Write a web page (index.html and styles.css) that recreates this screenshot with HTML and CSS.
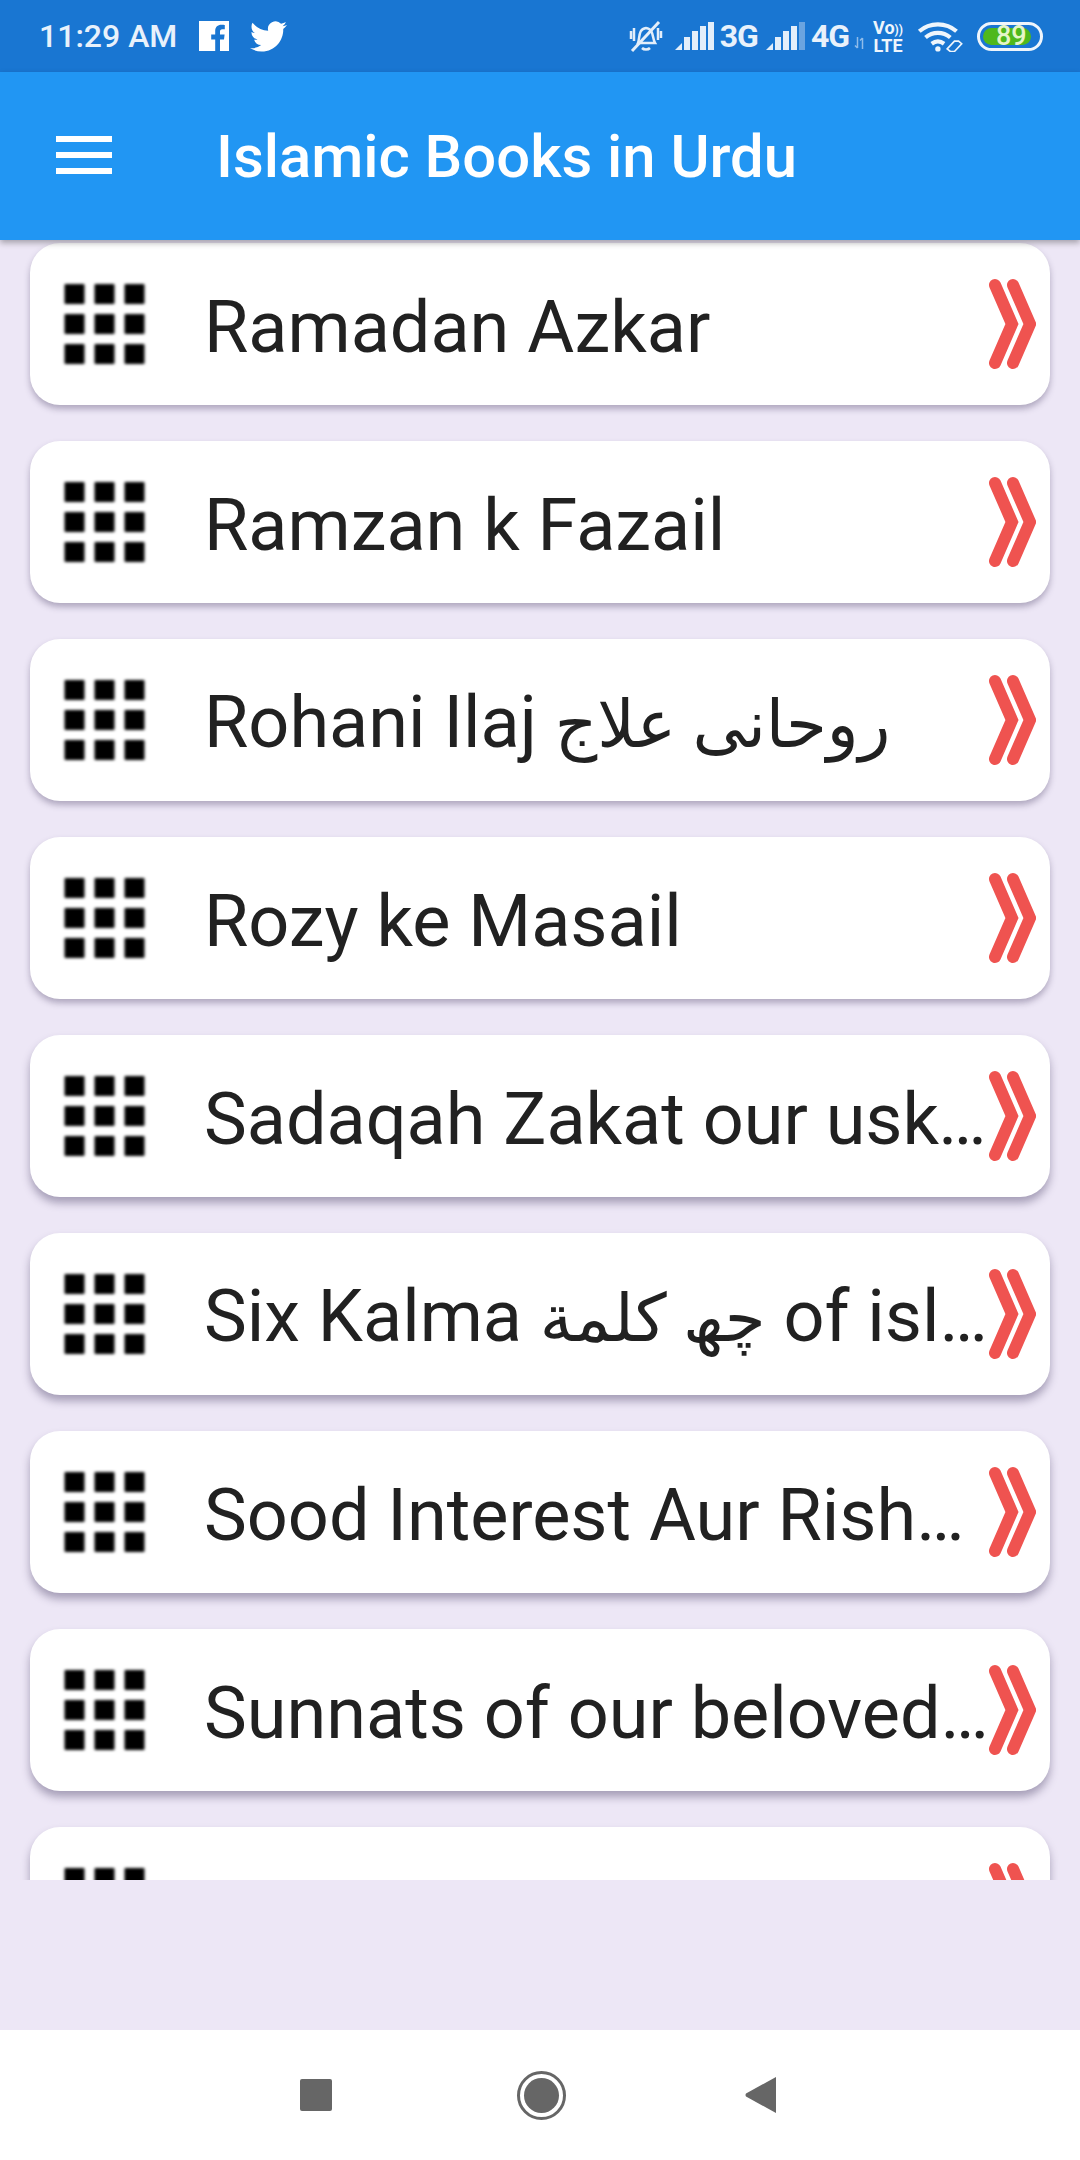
FILE: index.html
```html
<!DOCTYPE html>
<html lang="en">
<head>
  <meta charset="UTF-8">
  <meta name="viewport" content="width=device-width, initial-scale=1.0">
  <title>Islamic Books in Urdu</title>
  <link rel="stylesheet" href="styles.css">
</head>
<body>
  <!-- shared icons -->
  <svg class="icon-defs" width="0" height="0">
    <symbol id="grid" viewBox="0 0 84 82">
      <rect x="1.5" y="1" width="20" height="20" rx="1"/><rect x="31.5" y="1" width="20" height="20" rx="1"/><rect x="61.5" y="1" width="20" height="20" rx="1"/>
      <rect x="1.5" y="31" width="20" height="20" rx="1"/><rect x="31.5" y="31" width="20" height="20" rx="1"/><rect x="61.5" y="31" width="20" height="20" rx="1"/>
      <rect x="1.5" y="61" width="20" height="20" rx="1"/><rect x="31.5" y="61" width="20" height="20" rx="1"/><rect x="61.5" y="61" width="20" height="20" rx="1"/>
    </symbol>
    <symbol id="chevrons" viewBox="0 0 50 92">
      <path d="M9 7 L26 46 L9 85 M27 7 L44 46 L27 85" fill="none" stroke="#ef5350" stroke-width="12" stroke-linecap="round" stroke-linejoin="miter"/>
    </symbol>
  </svg>

  <!-- status bar -->
  <div class="status-bar">
    <span class="time">11:29 AM</span>
    <svg class="fb-icon" viewBox="0 0 30 30" width="30" height="30"><path fill="#fff" d="M0 0H30V30H21V18.5H25L25.6 13.6H21V10.6C21 9.2 21.4 8.2 23.4 8.2H25.8V3.9C25.4 3.8 24 3.7 22.3 3.7C18.8 3.7 16.2 5.9 16.2 10V13.6H12.2V18.5H16.2V30H0Z"/></svg>
    <svg class="tw-icon" viewBox="0 0 24 24" width="37" height="37"><path fill="#fff" d="M23.95 4.57a10 10 0 0 1-2.82.77 4.96 4.96 0 0 0 2.16-2.72c-.95.55-2 .96-3.13 1.18a4.92 4.92 0 0 0-8.38 4.48C7.69 8.09 4.07 6.13 1.64 3.16a4.82 4.82 0 0 0-.67 2.48c0 1.71.87 3.21 2.19 4.1a4.9 4.9 0 0 1-2.23-.62v.06a4.92 4.92 0 0 0 3.95 4.83 5 5 0 0 1-2.21.08 4.94 4.94 0 0 0 4.6 3.42A9.87 9.87 0 0 1 0 19.54a14 14 0 0 0 7.56 2.21c9.05 0 14-7.5 14-13.98 0-.21 0-.42-.02-.63a9.94 9.94 0 0 0 2.46-2.55z"/></svg>

    <div class="status-right">
      <svg class="bell" viewBox="0 0 34 34" width="34" height="34" fill="none" stroke="#e3eefa" stroke-width="2.5">
        <path d="M9 24C11 19 9 10 17 9C25 10 23 19 26 24Z"/>
        <path d="M13 29C15 31 19 31 21 29" />
        <path d="M2 12V20M5 9V22M29 9V21M32 12V19"/>
        <path d="M3 32L30 3" stroke-width="3"/>
      </svg>
      <svg class="bars" viewBox="0 0 39 28" width="39" height="28"><path fill="#e3eefa" d="M0 28L7 21V28Z"/><rect fill="#e3eefa" x="9" y="15" width="6" height="13"/><rect fill="#e3eefa" x="17" y="9" width="6" height="19"/><rect fill="#e3eefa" x="25" y="4" width="6" height="24"/><rect fill="#e3eefa" x="33" y="0" width="6" height="28"/></svg>
      <span class="net">3G</span>
      <svg class="bars" viewBox="0 0 39 28" width="39" height="28"><path fill="#e3eefa" d="M0 28L7 21V28Z"/><rect fill="#e3eefa" x="9" y="15" width="6" height="13"/><rect fill="#e3eefa" x="17" y="9" width="6" height="19"/><rect fill="#e3eefa" x="25" y="4" width="6" height="24"/><rect fill="#6aa4e0" x="33" y="0" width="6" height="28"/></svg>
      <span class="net net-last">4G</span>
      <svg class="updown" viewBox="0 0 12 12" width="12" height="12" fill="none" stroke="#8fbcea" stroke-width="1.5"><path d="M3.5 0V11M1 8.5L3.5 11M8.5 12V1M6 3.5L8.5 1"/></svg>
      <span class="volte"><span>Vo<small>))</small></span><span>LTE</span></span>
      <svg class="wifi" viewBox="0 0 46 30" width="48" height="31" fill="none" stroke="#eef5fc" stroke-width="4">
        <path d="M2 10C12 1 28 1 38 10M8 16C15 10 25 10 32 16M14 22C18 19 22 19 26 22"/>
        <circle cx="20" cy="27" r="2.6" fill="#eef5fc" stroke="none"/>
        <path d="M29 27L36 19.5L40 19.5L43 22L36 29.5L32 29.5Z" stroke-width="1.6"/>
      </svg>
      <div class="battery"><div class="battery-fill"></div><span class="battery-num">89</span></div>
    </div>
  </div>

  <!-- app bar -->
  <div class="app-bar">
    <div class="menu-icon"><span></span><span></span><span></span></div>
    <div class="app-title">Islamic Books in Urdu</div>
  </div>

  <!-- book list -->
  <div class="book-list">
    <div class="book-card">
      <svg class="grid-icon"><use href="#grid"/></svg>
      <span class="book-name">Ramadan Azkar</span>
      <svg class="chevron-icon"><use href="#chevrons"/></svg>
    </div>
    <div class="book-card">
      <svg class="grid-icon"><use href="#grid"/></svg>
      <span class="book-name">Ramzan k Fazail</span>
      <svg class="chevron-icon"><use href="#chevrons"/></svg>
    </div>
    <div class="book-card">
      <svg class="grid-icon"><use href="#grid"/></svg>
      <span class="book-name">Rohani Ilaj <span class="urdu">روحانی علاج</span></span>
      <svg class="chevron-icon"><use href="#chevrons"/></svg>
    </div>
    <div class="book-card">
      <svg class="grid-icon"><use href="#grid"/></svg>
      <span class="book-name">Rozy ke Masail</span>
      <svg class="chevron-icon"><use href="#chevrons"/></svg>
    </div>
    <div class="book-card">
      <svg class="grid-icon"><use href="#grid"/></svg>
      <span class="book-name">Sadaqah Zakat our uske Masail</span>
      <svg class="chevron-icon"><use href="#chevrons"/></svg>
    </div>
    <div class="book-card">
      <svg class="grid-icon"><use href="#grid"/></svg>
      <span class="book-name">Six Kalma <span class="urdu">چھ کلمة</span> of islam in Urdu</span>
      <svg class="chevron-icon"><use href="#chevrons"/></svg>
    </div>
    <div class="book-card">
      <svg class="grid-icon"><use href="#grid"/></svg>
      <span class="book-name">Sood Interest Aur Rishwat</span>
      <svg class="chevron-icon"><use href="#chevrons"/></svg>
    </div>
    <div class="book-card">
      <svg class="grid-icon"><use href="#grid"/></svg>
      <span class="book-name">Sunnats of our beloved Prophet</span>
      <svg class="chevron-icon"><use href="#chevrons"/></svg>
    </div>
    <div class="book-card">
      <svg class="grid-icon"><use href="#grid"/></svg>
      <span class="book-name"></span>
      <svg class="chevron-icon"><use href="#chevrons"/></svg>
    </div>
  </div>

  <div class="list-footer"></div>

  <!-- android nav -->
  <div class="nav-bar">
    <div class="nav-square"></div>
    <div class="nav-circle"><div class="nav-dot"></div></div>
    <svg class="nav-back" viewBox="0 0 32 36" width="32" height="36"><path fill="#666" d="M31 0V36L1 19.5Q0 18 1 16.5Z"/></svg>
  </div>
</body>
</html>
```

FILE: styles.css
```css
* {
  box-sizing: border-box;
}
body {
  margin: 0;
  width: 1080px;
  height: 2160px;
  display: flex;
  flex-direction: column;
  background: #ede7f6;
  font-family: Roboto, "DejaVu Sans", sans-serif;
  overflow: hidden;
}
.icon-defs {
  position: absolute;
}

/* status bar */
.status-bar {
  height: 72px;
  flex: none;
  display: flex;
  align-items: center;
  padding-left: 39px;
  background: #1976d2;
  color: #e8f1fb;
}
.time {
  font-size: 32px;
  font-weight: 500;
  margin-right: 22px;
}
.fb-icon {
  margin-right: 21px;
}
.status-right {
  margin-left: auto;
  display: flex;
  align-items: center;
  padding-right: 37px;
}
.bell {
  margin-right: 12px;
}
.bars {
  margin-right: 6px;
}
.net {
  font-size: 32px;
  font-weight: 700;
  letter-spacing: -1px;
  margin-right: 8px;
}
.net-last {
  margin-right: 7px;
}
.updown {
  margin: 14px 7px 0 -2px;
}
.volte {
  display: flex;
  flex-direction: column;
  align-items: center;
  font-size: 18px;
  font-weight: 700;
  line-height: 15px;
  margin-right: 14px;
  color: #eef5fc;
}
.volte small {
  font-size: 12px;
}
.wifi {
  margin-right: 12px;
}
.battery {
  position: relative;
  width: 66px;
  height: 29px;
  border: 3px solid #eef5fc;
  border-radius: 15px;
  padding: 3px;
}
.battery-fill {
  width: 89%;
  height: 100%;
  border-radius: 9px;
  background: #4fb81c;
}
.battery-num {
  position: absolute;
  left: 16px;
  top: -4px;
  font-size: 27px;
  line-height: 31px;
  font-weight: 500;
  color: #e6f5c8;
}

/* app bar */
.app-bar {
  position: relative;
  z-index: 2;
  height: 168px;
  flex: none;
  display: flex;
  align-items: center;
  padding-left: 56px;
  background: #2196f3;
  box-shadow: 0 3px 6px rgba(0, 0, 0, 0.3);
}
.menu-icon {
  width: 56px;
  display: flex;
  flex-direction: column;
  gap: 10px;
  margin-right: 104px;
  margin-top: -2px;
}
.menu-icon span {
  height: 6px;
  background: #fff;
}
.app-title {
  font-size: 59.8px;
  font-weight: 500;
  color: #fff;
  padding-top: 2px;
}

/* list */
.book-list {
  height: 1640px;
  flex: none;
  overflow: hidden;
  display: flex;
  flex-direction: column;
  gap: 36px;
  padding: 3px 30px 0;
}
.book-card {
  height: 162px;
  flex: none;
  display: flex;
  align-items: center;
  padding-left: 33px;
  padding-right: 14px;
  border-radius: 30px;
  background: #fff;
  box-shadow: 0 4px 6px rgba(60, 50, 90, 0.35);
}
.book-card:nth-child(n+5) {
  box-shadow: 0 6px 8px rgba(60, 50, 90, 0.4);
}
.grid-icon {
  width: 84px;
  height: 82px;
  flex: none;
  margin-right: 57px;
  filter: blur(1.5px);
}
.book-name {
  flex: 1;
  min-width: 0;
  font-size: 72px;
  line-height: 84px;
  padding-top: 7px;
  color: #212121;
  white-space: nowrap;
  overflow: hidden;
  text-overflow: ellipsis;
}
.urdu {
  font-size: 66px;
}
.chevron-icon {
  width: 50px;
  height: 92px;
  flex: none;
  margin-left: -9px;
}
.list-footer {
  flex: 1;
}

/* android nav */
.nav-bar {
  height: 130px;
  flex: none;
  display: flex;
  align-items: center;
  background: #fff;
  padding-left: 300px;
}
.nav-square {
  width: 32px;
  height: 32px;
  border-radius: 2px;
  background: #666;
  margin-right: 185px;
}
.nav-circle {
  width: 49px;
  height: 49px;
  border-radius: 50%;
  border: 3px solid #666;
  padding: 4px;
  margin-right: 179px;
}
.nav-dot {
  width: 100%;
  height: 100%;
  border-radius: 50%;
  background: #666;
}
```
